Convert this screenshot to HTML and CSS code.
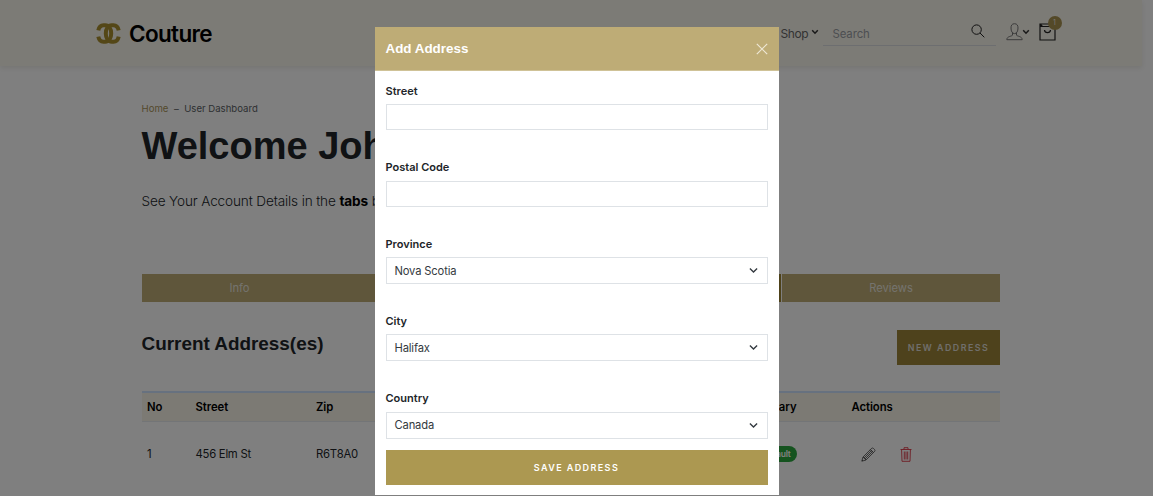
FILE: index.html
```html
<!DOCTYPE html>
<html lang="en">
<head>
<meta charset="utf-8">
<title>Couture - User Dashboard</title>
<link rel="stylesheet" href="styles.css">
</head>
<body>
<header class="site-header">
  <a class="brand">
    <svg class="brand-mark" viewBox="0 0 25 21">
      <path d="M2.300 7.400C3 4 4.700 2.300 7.500 2.300h1.700c3.800 0 6 3.400 6 8.200s-2.200 8.200-6 8.200H7.500c-2.800 0-4.500-1.700-5.200-5.100"/>
      <path d="M22.700 7.400c-.7-3.400-2.400-5.100-5.200-5.100h-1.700c-3.800 0-6 3.400-6 8.200s2.200 8.200 6 8.200h1.700c2.800 0 4.500-1.700 5.200-5.100"/>
    </svg>
    <span class="brand-name">Couture</span>
  </a>
  <nav class="tools">
    <span class="shop">Shop</span>
    <svg class="caret shop-caret" viewBox="0 0 8 6"><path d="M1.200 1.200 4 4.200 6.800 1.200"/></svg>
    <div class="search"><span>Search</span>
      <svg viewBox="0 0 14 14"><circle cx="5.600" cy="5.600" r="4.700"/><path d="M9 9l4.300 4.300"/></svg>
    </div>
    <svg class="user" viewBox="0 0 17 18"><path d="M8.500.7C5.800.7 5 2.600 5 5c0 3 1.200 5.600 3.500 5.600S12 8 12 5C12 2.600 11.200.7 8.500.7zM6.500 10v2.200C5.500 13.500.8 13.200.8 16.700h15.400c0-3.500-4.700-3.200-5.700-4.500V10"/></svg>
    <svg class="caret user-caret" viewBox="0 0 8 6"><path d="M1.200 1.200 4 4.200 6.800 1.200"/></svg>
    <div class="bag">
      <svg viewBox="0 0 17 18"><path d="M1 3.500V17h15V3.500zM1 3.500V1h13v2.500M1 1l2.500 2.500M5.500 7c.3 3.500 5.700 3.500 6 0"/></svg>
      <span class="count">1</span>
    </div>
  </nav>
</header>
<main class="page">
  <div class="crumbs"><a>Home</a><span class="dash">–</span><span>User Dashboard</span></div>
  <h1>Welcome John</h1>
  <p class="intro">See Your Account Details in the <b>tabs</b> below</p>
  <div class="tabs">
    <a>Info</a><a>Orders</a><a class="active">Addresses</a><a class="reviews">Reviews</a>
  </div>
  <div class="section-head">
    <h2>Current Address(es)</h2>
    <button class="new-btn">NEW ADDRESS</button>
  </div>
  <div class="row head"><span>No</span><span>Street</span><span>Zip</span><span class="primary">Primary</span><span>Actions</span></div>
  <div class="row"><span>1</span><span>456 Elm St</span><span>R6T8A0</span><span class="primary"><i class="badge">Default</i></span>
    <span class="actions">
      <svg class="pencil" viewBox="0 0 15 15"><path d="M.8 14.200 2 10 10.800 1.200c1-1 4 2 3 3L5 13zM2 10l3 3M9.300 2.700l3 3M3 11 11 3M4 12l8-8M1 13l1 1"/></svg>
      <svg class="trash" viewBox="0 0 12 15"><path d="M.5 2.500h11M4 2.300V.7h4v1.600M1.600 2.500 2 14.300h8l.4-11.800M4.300 4.500v8M6 4.500v8M7.700 4.500v8"/></svg>
    </span>
  </div>
</main>
<div class="backdrop">
  <form class="modal">
    <div class="modal-head"><h3>Add Address</h3>
      <svg viewBox="0 0 12 12"><path d="M.8.8l10.400 10.400M11.200.8.8 11.200"/></svg>
    </div>
    <div class="modal-body">
      <div class="field"><label>Street</label><div class="input"></div></div>
      <div class="field"><label>Postal Code</label><div class="input"></div></div>
      <div class="field select"><label>Province</label><div class="input"><span>Nova Scotia</span><svg viewBox="0 0 8 6"><path d="M.8 1.200 4 4.400 7.200 1.200"/></svg></div></div>
      <div class="field select"><label>City</label><div class="input"><span>Halifax</span><svg viewBox="0 0 8 6"><path d="M.8 1.200 4 4.400 7.200 1.200"/></svg></div></div>
      <div class="field select"><label>Country</label><div class="input"><span>Canada</span><svg viewBox="0 0 8 6"><path d="M.8 1.200 4 4.400 7.200 1.200"/></svg></div></div>
      <button class="save-btn" type="button">SAVE ADDRESS</button>
    </div>
  </form>
</div>
</body>
</html>
```
FILE: styles.css
```css
* { box-sizing: border-box; }
body { margin: 0; height: 496px; overflow: hidden; background: #fff; color: #212529; font: 300 11px Inter, sans-serif; }
svg { display: block; fill: none; stroke: currentColor; flex: none; }
h1, h2, h3, p { margin: 0; }
button { border: 0; padding: 0; font-family: Inter, sans-serif; font-weight: 600; color: #fff; }

.site-header { width: 1142px; height: 66px; padding-left: 96px; display: flex; align-items: center; background: #f9f6ed; box-shadow: 0 2px 5px rgba(90, 80, 50, .12); }
.brand { display: flex; align-items: center; width: 684.500px; }
.brand-mark { width: 25px; height: 21px; stroke: #a88f2e; stroke-width: 4; }
.brand-name { margin-left: 8px; font-weight: 600; font-size: 22.500px; letter-spacing: -.65px; color: #000; }
.tools { display: flex; align-items: center; color: #666; }
.shop { width: 27px; font-size: 12px; font-weight: 400; letter-spacing: -.4px; white-space: nowrap; }
.caret { width: 8px; height: 6px; stroke: #333; stroke-width: 1.500; margin-top: -2px; }
.shop-caret { margin-left: 3px; }
.search { width: 173px; height: 26px; margin-left: 4px; padding: 0 11px 0 10px; display: flex; align-items: center; justify-content: space-between; border-bottom: 1px solid #dadce0; font-size: 11.400px; color: #9a9ea4; }
.search span { margin-top: 2px; font-weight: 400; letter-spacing: -.1px; }
.search svg { width: 14px; height: 14px; stroke: #222; margin-top: -3px; }
.user { width: 17px; height: 18px; margin-left: 10px; color: #777; margin-top: -2px; }
.user-caret { margin-left: -1px; }
.bag { position: relative; margin-left: 9px; margin-top: -2px; color: #222; }
.bag svg { width: 17px; height: 18px; stroke-width: 1.200; }
.count { position: absolute; left: 9px; top: -7px; width: 14px; height: 14px; border-radius: 50%; background: #a89250; color: #fff; font-size: 7px; line-height: 14px; text-align: center; }

.page { width: 858.500px; margin-left: 141.500px; padding-top: 35px; }
.crumbs { display: flex; height: 16px; line-height: 16px; font-size: 9.600px; font-weight: 400; color: #5b5f65; }
.crumbs a { color: #a9945a; }
.dash { margin: 0 5.500px; }
h1 { font: 700 38px/44px "Liberation Sans", sans-serif; margin-top: 7px; }
.intro { margin-top: 23px; font-size: 13.600px; line-height: 20px; letter-spacing: -.14px; }
.intro b { font-weight: 700; color: #000; }
.tabs { display: grid; grid-template-columns: 196px 1fr 225px 219px; height: 28px; margin-top: 63px; }
.tabs a { background: #beac76; color: #e9e6dd; font-size: 11.200px; line-height: 28px; text-align: center; font-weight: 400; }
.tabs .active { background: #9a8232; }
.tabs .reviews { border-left: 1px solid #fff; }
.section-head { display: flex; justify-content: space-between; height: 35px; margin-top: 27.500px; }
h2 { font: 700 18.900px/28px "Liberation Sans", sans-serif; }
.new-btn { width: 103px; background: #9c8539; font-size: 8.800px; letter-spacing: 1.500px; color: #e0ded8; }
.row { display: grid; grid-template-columns: 48.500px 120.500px 432px 103.500px 1fr; height: 64px; padding-left: 5.500px; align-items: center; font-size: 11.300px; letter-spacing: -.25px; font-weight: 400; }
.row.head { height: 31px; margin-top: 26.500px; background: #f8f4e9; border-top: 2px solid #cfe2ff; border-bottom: 1px solid #e7ebef; font-weight: 600; letter-spacing: -.05px; color: #000; }
.primary { justify-self: end; margin-right: 55px; }
.badge { display: block; padding: 0 6px; border-radius: 8px; background: #2aa63f; color: #fff; font: 600 8.500px/16px Inter, sans-serif; }
.actions { display: flex; color: #444; }
.pencil { width: 15px; height: 15px; margin-left: 9.500px; stroke-width: .8; }
.trash { width: 12px; height: 15px; margin-left: 24px; color: #dc3545; stroke-width: .9; }

.backdrop { position: fixed; inset: 0; display: flex; justify-content: center; align-items: flex-start; padding-top: 27px; background: rgba(0, 0, 0, .5); }
.modal { width: 404px; height: 468px; background: #fff; }
.modal-head { height: 44px; padding: 0 10.500px 0 11px; display: flex; align-items: center; justify-content: space-between; background: #beac76; border-bottom: 1px solid #cfc297; color: #fff; }
.modal-head h3 { font: 700 13.400px "Liberation Sans", sans-serif; }
.modal-head svg { width: 12px; height: 12px; color: #eee7d4; stroke-width: 1.200; }
.modal-body { padding: 11px 11px 0; }
.field { height: 76.400px; }
.field.select { height: 77.300px; }
label { display: block; height: 22.400px; line-height: 19px; font-size: 11px; font-weight: 600; }
.input { height: 26px; border: 1px solid #dee2e6; }
.select .input { height: 27px; padding: 0 9px 0 8px; display: flex; align-items: center; justify-content: space-between; font-size: 11.200px; letter-spacing: -.15px; font-weight: 400; color: #343a40; }
.input svg { width: 9px; height: 7px; stroke: #343a40; stroke-width: 1.200; }
.field.select:nth-child(5) { height: 60.300px; }
.save-btn { display: block; width: 100%; height: 35px; background: #ac9851; font-size: 9px; letter-spacing: 1.400px; }
```
